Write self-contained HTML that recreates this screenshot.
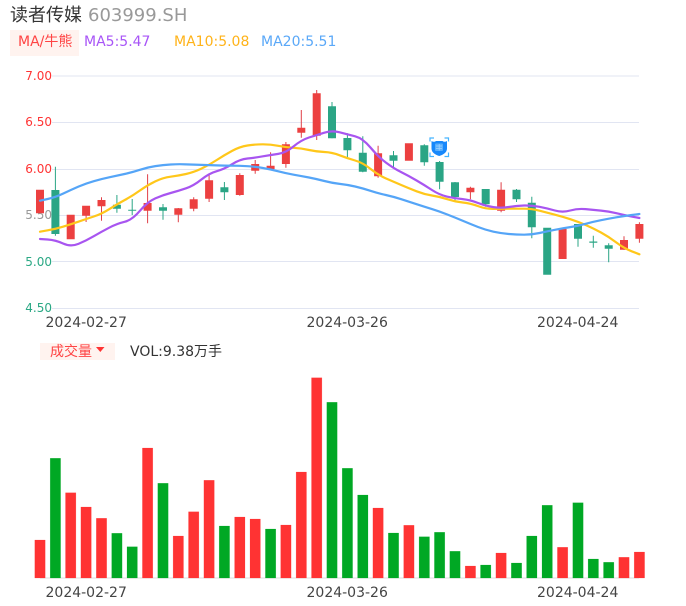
<!DOCTYPE html>
<html>
<head>
<meta charset="utf-8">
<style>
html,body{margin:0;padding:0;background:#fff;width:686px;height:606px;overflow:hidden}
svg{display:block}
text{font-family:"DejaVu Sans","Noto Sans CJK SC",sans-serif}
</style>
</head>
<body>
<svg width="686" height="606" viewBox="0 0 686 606" xmlns="http://www.w3.org/2000/svg">
<rect x="10" y="30" width="69" height="26" fill="#fff3ef"/>
<text x="10" y="21" font-size="18" fill="#333">读者传媒</text>
<text x="88" y="21" font-size="18" fill="#999">603999.SH</text>
<text x="18" y="46" font-size="14" fill="#ff4444">MA/牛熊</text>
<text x="84" y="46" font-size="14" fill="#a855f7">MA5:5.47</text>
<text x="174" y="46" font-size="14" fill="#ffb319">MA10:5.08</text>
<text x="261" y="46" font-size="14" fill="#5aa8f8">MA20:5.51</text>

<g stroke="#e1e5f2" stroke-width="1">
<path d="M52 76H639M52 122.5H639M52 169.5H639M52 215.5H639M52 261.5H639M52 308.5H639"/>
</g>
<g font-size="12" text-anchor="end">
<text x="52" y="80" fill="#ff3333">7.00</text>
<text x="52" y="126" fill="#ff3333">6.50</text>
<text x="52" y="173" fill="#ff3333">6.00</text>
<text x="52" y="219" fill="#999">5.50</text>
<text x="52" y="266" fill="#2aa884">5.00</text>
<text x="52" y="312" fill="#2aa884">4.50</text>
</g>

<!-- wicks -->
<path fill="none" stroke="#e04048" stroke-width="1" d="M86.1 215V222M101.5 197.3V220.7M147.6 174.3V223.3M178.3 208V222.3M193.7 197.3V211.3M209.1 175V202M239.8 173.3V195.7M255.2 160V173.7M270.6 152.3V169M285.9 142V167.7M301.3 110V137.7M316.7 90V140M378.1 145.7V177.7M470.4 186.7V199.3M501.1 182.3V212.3M624 236.3V249.7M639.4 222.3V242.7"/>
<path fill="none" stroke="#2ba585" stroke-width="1" d="M55.4 166.7V235.7M116.9 195V212.7M132.2 199V215M163 204V219.7M224.4 182V200M332 102V138.3M347.4 133.3V157.3M362.8 136.3V172.3M393.5 151V168M424.3 144.3V165.7M439.6 161V189.3M455 182V200.7M485.7 189V206.7M516.5 189V202M531.8 196.7V238.3M578 224V246.7M593.3 235.7V247.7M608.7 243.3V262.3"/>
<!-- bodies -->
<path fill="#ec4040" d="M36 189.7h8V213.3h-8zM66.7 214.7h8V239.3h-8zM82.1 205.7h8V215.7h-8zM97.5 200h8V206.3h-8zM143.6 203h8V210.7h-8zM174.3 208.3h8V214.7h-8zM189.7 199.3h8V208.7h-8zM205.1 180.3h8V198.7h-8zM235.8 175h8V195h-8zM251.2 164h8V170.7h-8zM266.6 165.7h8V169h-8zM281.9 144.3h8V164h-8zM297.3 127.7h8V132.7h-8zM312.7 93.3h8V135.7h-8zM374.1 153.3h8V176.3h-8zM404.9 143.3h8V160.7h-8zM466.4 187.7h8V192.3h-8zM497.1 189.7h8V210.7h-8zM558.6 229h8V259h-8zM620 240h8V249.7h-8zM635.4 224h8V238.7h-8z"/>
<path fill="#2ba585" d="M51.4 190h8V234h-8zM112.9 204.7h8V208.7h-8zM128.2 209.7h8V210.7h-8zM159 207.3h8V210.7h-8zM220.4 187.3h8V192.3h-8zM328 106.3h8V138.3h-8zM343.4 138h8V150.3h-8zM358.8 152.7h8V171.7h-8zM389.5 155.3h8V160.7h-8zM420.3 145.3h8V162.3h-8zM435.6 162h8V181.7h-8zM451 182.3h8V197h-8zM481.7 189h8V204.3h-8zM512.5 189.7h8V199.3h-8zM527.8 202.7h8V227.3h-8zM543.2 227.7h8V274.7h-8zM574 224h8V238.7h-8zM589.3 241.5h8V242.7h-8zM604.7 245.3h8V248.7h-8z"/>

<!-- MA lines -->
<g fill="none" stroke-width="2.2" stroke-linejoin="round" stroke-linecap="round">
<path stroke="#ffc71a" d="M40 231.7L47.7 230.35Q55.4 229 63.05 226.65Q70.7 224.3 78.4 221.65Q86.1 219 93.8 216.5Q101.5 214 109.2 209.15Q116.9 204.3 124.55 200.15Q132.2 196 139.9 190.5Q147.6 185 155.3 181.35Q163 177.7 170.65 176.7Q178.3 175.7 186 174Q193.7 172.3 201.4 168.65Q209.1 165 216.75 160Q224.4 155 232.1 150.85Q239.8 146.7 247.5 145.5Q255.2 144.3 262.9 144.3Q270.6 144.3 278.25 145.8Q285.9 147.3 293.6 147.8Q301.3 148.3 309 150Q316.7 151.7 324.35 152Q332 152.3 339.7 155.3Q347.4 158.3 355.1 160.5Q362.8 162.7 370.45 168.85Q378.1 175 385.8 178.35Q393.5 181.7 401.2 185Q408.9 188.3 416.6 191.3Q424.3 194.3 431.95 195.5Q439.6 196.7 447.3 199.2Q455 201.7 462.7 202.5Q470.4 203.3 478.05 206.15Q485.7 209 493.4 208.85Q501.1 208.7 508.8 208.7Q516.5 208.7 524.15 208.7Q531.8 208.7 539.5 210.7Q547.2 212.7 554.9 214.7Q562.6 216.7 570.3 219.2Q578 221.7 585.65 225Q593.3 228.3 601 232.5Q608.7 236.7 616.35 242.5Q624 248.3 631.7 251.3L639.4 254.3"/>
<path stroke="#a855f0" d="M40 239L47.7 239.5Q55.4 240 63.05 243.5Q70.7 247 78.4 243.85Q86.1 240.7 93.8 236.2Q101.5 231.7 109.2 227.7Q116.9 223.7 124.55 221.85Q132.2 220 139.9 210.85Q147.6 201.7 155.3 198.35Q163 195 170.65 193Q178.3 191 186 188.35Q193.7 185.7 201.4 179.5Q209.1 173.3 216.75 171.15Q224.4 169 232.1 164.15Q239.8 159.3 247.5 158.5Q255.2 157.7 262.9 156.35Q270.6 155 278.25 153.85Q285.9 152.7 293.6 146.35Q301.3 140 309 137.5Q316.7 135 324.35 132.65Q332 130.3 339.7 132.3Q347.4 134.3 355.1 136.3Q362.8 138.3 370.45 147.5Q378.1 156.7 385.8 162.5Q393.5 168.3 401.2 172.15Q408.9 176 416.6 180.5Q424.3 185 431.95 190Q439.6 195 447.3 196.65Q455 198.3 462.7 199.15Q470.4 200 478.05 203Q485.7 206 493.4 207.15Q501.1 208.3 508.8 207Q516.5 205.7 524.15 205.5Q531.8 205.3 539.5 206.8Q547.2 208.3 554.9 210.5Q562.6 212.7 570.3 210.5Q578 208.3 585.65 209.15Q593.3 210 601 210.65Q608.7 211.3 616.35 213.15Q624 215 631.7 216.5L639.4 218"/>
<path stroke="#55a5f7" d="M40 200.7L47.7 199Q55.4 197.3 63.05 193.65Q70.7 190 78.4 186.65Q86.1 183.3 93.8 181.15Q101.5 179 109.2 177.35Q116.9 175.7 124.55 174Q132.2 172.3 139.9 169.8Q147.6 167.3 155.3 166.15Q163 165 170.65 164.5Q178.3 164 186 164.35Q193.7 164.7 201.4 164.85Q209.1 165 216.75 165.35Q224.4 165.7 232.1 165.7Q239.8 165.7 247.5 166.2Q255.2 166.7 262.9 168Q270.6 169.3 278.25 171.3Q285.9 173.3 293.6 174.65Q301.3 176 309 177.5Q316.7 179 324.35 181Q332 183 339.7 183.85Q347.4 184.7 355.1 186.5Q362.8 188.3 370.45 190.8Q378.1 193.3 385.8 195Q393.5 196.7 401.2 199.2Q408.9 201.7 416.6 204.2Q424.3 206.7 431.95 209.1Q439.6 211.5 447.3 214.5Q455 217.5 462.7 220.75Q470.4 224 478.05 227Q485.7 230 493.4 231.65Q501.1 233.3 508.8 234Q516.5 234.7 524.15 234.7Q531.8 234.7 539.5 233Q547.2 231.3 554.9 229.8Q562.6 228.3 570.3 227.15Q578 226 585.65 223.85Q593.3 221.7 601 220.2Q608.7 218.7 616.35 217.35Q624 216 631.7 215L639.4 214"/>
</g>

<!-- marker icon -->
<g fill="none" stroke="#45b4ff" stroke-width="1.2">
<path d="M430 141.5V138H434M444.5 138H448.5V141.5M448.5 152.5V156.5H444.5M434 156.5H430V152.5"/>
</g>
<path fill="#1788fb" d="M431.5 141Q434 142.5 436 141H442.5Q444.5 142.5 447 141V148.5Q447 153.5 439.2 156Q431.5 153.5 431.5 148.5Z"/>
<rect x="435" y="143.5" width="8" height="7.5" rx="1" fill="#58aefc"/>
<path stroke="#9fd3ff" stroke-width=".8" fill="none" d="M436 146H442M436 148.5H442M439.2 144V150.5"/>

<text x="45.5" y="327" font-size="14" fill="#444">2024-02-27</text>
<text x="306.5" y="327" font-size="14" fill="#444">2024-03-26</text>
<text x="537" y="327" font-size="14" fill="#444">2024-04-24</text>

<!-- volume header -->
<rect x="40" y="343" width="75" height="17" fill="#fff3ef"/>
<text x="50" y="356" font-size="14" fill="#ff4444">成交量</text>
<path fill="#ff3333" d="M96 347h8.5l-4.2 5z"/>
<text x="130" y="356" font-size="14" fill="#333">VOL:9.38万手</text>

<!-- volume bars -->
<rect x="40" y="577.5" width="599" height="1" fill="#ddd"/>
<path fill="#ff3333" stroke="#ff3333" stroke-opacity=".35" stroke-width=".5" d="M34.8 540h10.4V578h-10.4zM65.5 492.7h10.4V578h-10.4zM80.9 507h10.4V578h-10.4zM96.3 518.3h10.4V578h-10.4zM142.4 448h10.4V578h-10.4zM173.1 536h10.4V578h-10.4zM188.5 511.7h10.4V578h-10.4zM203.9 480.3h10.4V578h-10.4zM234.6 517h10.4V578h-10.4zM250 519h10.4V578h-10.4zM280.7 525h10.4V578h-10.4zM296.1 472h10.4V578h-10.4zM311.5 377.7h10.4V578h-10.4zM372.9 508h10.4V578h-10.4zM403.7 525.3h10.4V578h-10.4zM465.2 566h10.4V578h-10.4zM495.9 553h10.4V578h-10.4zM557.4 547.3h10.4V578h-10.4zM618.8 557.3h10.4V578h-10.4zM634.2 552h10.4V578h-10.4z"/>
<path fill="#00a824" stroke="#00a824" stroke-opacity=".35" stroke-width=".5" d="M50.2 458.3h10.4V578h-10.4zM111.7 533.3h10.4V578h-10.4zM127 546.7h10.4V578h-10.4zM157.8 483.3h10.4V578h-10.4zM219.2 526h10.4V578h-10.4zM265.4 529h10.4V578h-10.4zM326.8 402.3h10.4V578h-10.4zM342.2 468.3h10.4V578h-10.4zM357.6 495h10.4V578h-10.4zM388.3 533h10.4V578h-10.4zM419.1 536.7h10.4V578h-10.4zM434.4 532.3h10.4V578h-10.4zM449.8 551.3h10.4V578h-10.4zM480.5 565h10.4V578h-10.4zM511.3 563h10.4V578h-10.4zM526.6 536h10.4V578h-10.4zM542 505.3h10.4V578h-10.4zM572.8 502.7h10.4V578h-10.4zM588.1 559h10.4V578h-10.4zM603.5 562.3h10.4V578h-10.4z"/>

<text x="45.5" y="597" font-size="14" fill="#444">2024-02-27</text>
<text x="306.5" y="597" font-size="14" fill="#444">2024-03-26</text>
<text x="537" y="597" font-size="14" fill="#444">2024-04-24</text>
</svg>
</body>
</html>
